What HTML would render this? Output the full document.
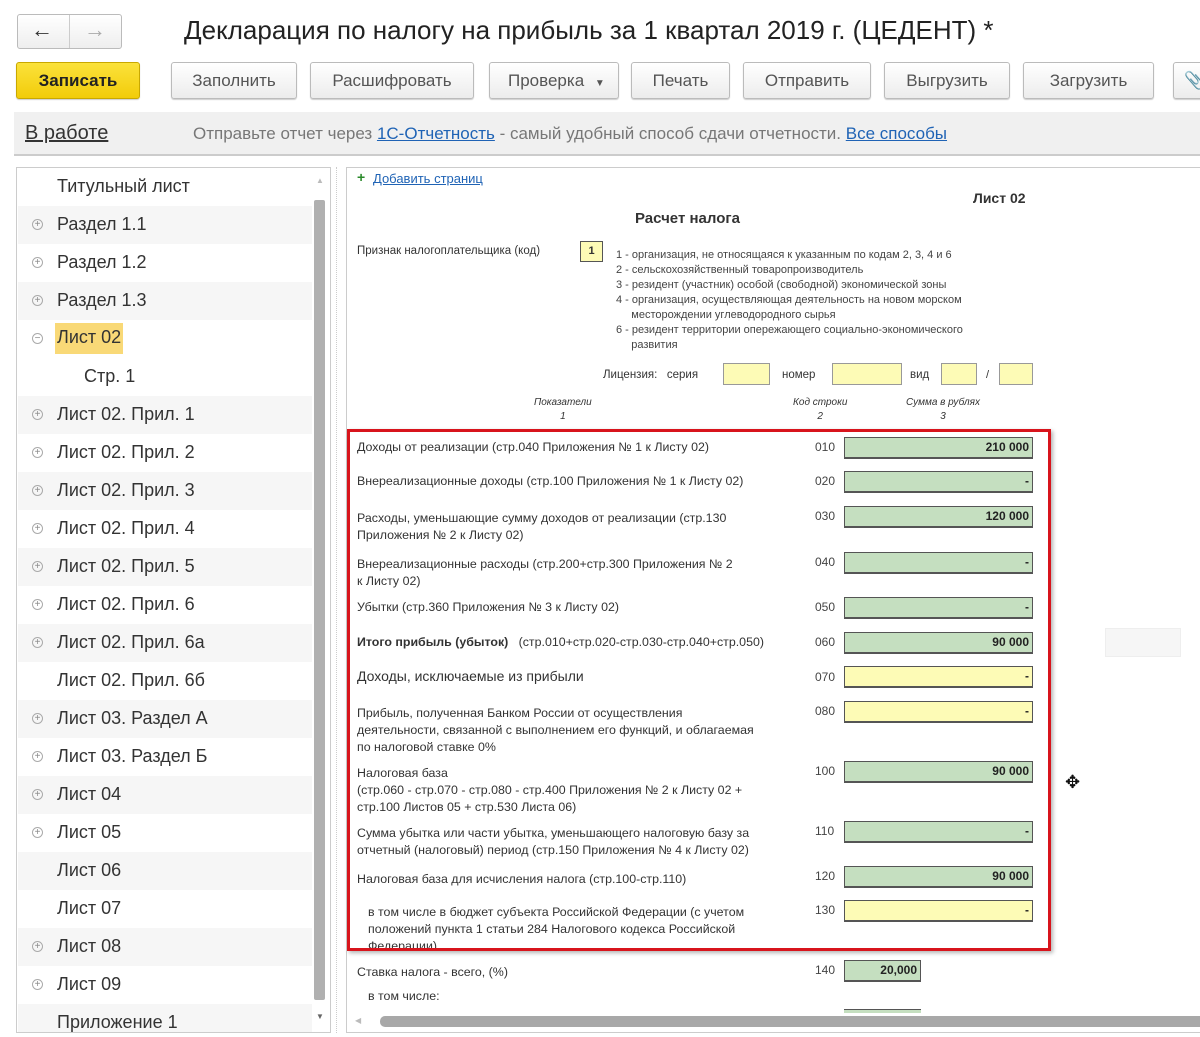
<!DOCTYPE html>
<html><head><meta charset="utf-8"><style>
*{margin:0;padding:0;box-sizing:border-box}
body{width:1200px;height:1037px;overflow:hidden;background:#fff;font-family:"Liberation Sans","DejaVu Sans",sans-serif;color:#333;position:relative}
.a{position:absolute;white-space:nowrap}
.btn{position:absolute;top:62px;height:37px;border:1px solid #bbb;border-radius:3px;background:linear-gradient(#fff,#ececec);box-shadow:0 1px 1px rgba(0,0,0,.2);font-size:17px;color:#555;text-align:center;line-height:35px}
.tr{position:absolute;left:18px;width:294px;height:38px;font-size:18px;color:#333}
.tr span.t{position:absolute;left:39px;top:8px}
.tr .ic{position:absolute;left:14px;top:13px;width:11px;height:11px;border:1px solid #aaa;border-radius:50%;font-size:10px;line-height:9px;text-align:center;color:#888}
.f{position:absolute;font-size:12.4px;color:#333;white-space:nowrap;line-height:17px}
.c{position:absolute;left:815px;font-size:12px;color:#444}
.g{position:absolute;left:844px;width:189px;height:22px;background:#c5dfc0;border:1px solid #555;border-bottom-width:2px;font-size:12px;font-weight:bold;text-align:right;padding-right:3px;line-height:19px;color:#222}
.y{background:#fdfbb6}
.lnk{color:#1f63b5;text-decoration:underline}
</style></head><body>
<div class="a" style="left:17px;top:14px;width:105px;height:35px;border:1px solid #bbb;border-radius:3px;background:linear-gradient(#fff,#eee)"></div>
<div class="a" style="left:69px;top:15px;width:1px;height:33px;background:#ccc"></div>
<div class="a" style="left:31px;top:17px;font-size:22px;color:#333">&#8592;</div>
<div class="a" style="left:84px;top:17px;font-size:22px;color:#aaa">&#8594;</div>
<div class="a" style="left:184px;top:15px;font-size:26px;color:#222">Декларация по налогу на прибыль за 1 квартал 2019 г. (ЦЕДЕНТ) *</div>
<div class="btn" style="left:16px;width:124px;background:linear-gradient(#fbe23b,#f2cc0a);border-color:#c9a800;font-weight:bold;color:#222">Записать</div>
<div class="btn" style="left:171px;width:126px">Заполнить</div>
<div class="btn" style="left:310px;width:164px">Расшифровать</div>
<div class="btn" style="left:489px;width:130px;text-align:left;padding-left:18px">Проверка <span style="font-size:10px;margin-left:6px">&#9660;</span></div>
<div class="btn" style="left:631px;width:99px">Печать</div>
<div class="btn" style="left:743px;width:128px">Отправить</div>
<div class="btn" style="left:884px;width:126px">Выгрузить</div>
<div class="btn" style="left:1023px;width:131px">Загрузить</div>
<div class="btn" style="left:1173px;width:40px;text-align:left;padding-left:10px;color:#777">&#128206;</div>
<div class="a" style="left:14px;top:112px;width:1186px;height:44px;background:#f0f0f0;border-bottom:2px solid #ccc"></div>
<div class="a" style="left:25px;top:122px;font-size:20px;color:#333;text-decoration:underline">В работе</div>
<div class="a" style="left:193px;top:124px;font-size:17px;color:#777">Отправьте отчет через <span class="lnk">1С-Отчетность</span> - самый удобный способ сдачи отчетности. <span class="lnk">Все способы</span></div>
<div class="a" style="left:16px;top:167px;width:315px;height:866px;border:1px solid #ccc;background:#fff;overflow:hidden"></div>
<div class="a" style="left:17px;top:168px;width:297px;height:864px;overflow:hidden">
<div class="tr" style="top:0;left:1px"><span class="t">Титульный лист</span></div>
<div class="tr" style="top:38px;left:1px;background:#f6f6f6"><span class="ic">+</span><span class="t">Раздел 1.1</span></div>
<div class="tr" style="top:76px;left:1px"><span class="ic">+</span><span class="t">Раздел 1.2</span></div>
<div class="tr" style="top:114px;left:1px;background:#f6f6f6"><span class="ic">+</span><span class="t">Раздел 1.3</span></div>
<div class="tr" style="top:152px;left:1px"><span class="ic">&#8722;</span><span class="t" style="left:37px;top:3px;padding:4px 2px 6px;background:#f9d977">Лист 02</span></div>
<div class="tr" style="top:190px;left:1px;background:#fff"><span class="t" style="left:66px">Стр. 1</span></div>
<div class="tr" style="top:228px;left:1px;background:#f6f6f6"><span class="ic">+</span><span class="t">Лист 02. Прил. 1</span></div>
<div class="tr" style="top:266px;left:1px"><span class="ic">+</span><span class="t">Лист 02. Прил. 2</span></div>
<div class="tr" style="top:304px;left:1px;background:#f6f6f6"><span class="ic">+</span><span class="t">Лист 02. Прил. 3</span></div>
<div class="tr" style="top:342px;left:1px"><span class="ic">+</span><span class="t">Лист 02. Прил. 4</span></div>
<div class="tr" style="top:380px;left:1px;background:#f6f6f6"><span class="ic">+</span><span class="t">Лист 02. Прил. 5</span></div>
<div class="tr" style="top:418px;left:1px"><span class="ic">+</span><span class="t">Лист 02. Прил. 6</span></div>
<div class="tr" style="top:456px;left:1px;background:#f6f6f6"><span class="ic">+</span><span class="t">Лист 02. Прил. 6а</span></div>
<div class="tr" style="top:494px;left:1px"><span class="t">Лист 02. Прил. 6б</span></div>
<div class="tr" style="top:532px;left:1px;background:#f6f6f6"><span class="ic">+</span><span class="t">Лист 03. Раздел А</span></div>
<div class="tr" style="top:570px;left:1px"><span class="ic">+</span><span class="t">Лист 03. Раздел Б</span></div>
<div class="tr" style="top:608px;left:1px;background:#f6f6f6"><span class="ic">+</span><span class="t">Лист 04</span></div>
<div class="tr" style="top:646px;left:1px"><span class="ic">+</span><span class="t">Лист 05</span></div>
<div class="tr" style="top:684px;left:1px;background:#f6f6f6"><span class="t">Лист 06</span></div>
<div class="tr" style="top:722px;left:1px"><span class="t">Лист 07</span></div>
<div class="tr" style="top:760px;left:1px;background:#f6f6f6"><span class="ic">+</span><span class="t">Лист 08</span></div>
<div class="tr" style="top:798px;left:1px"><span class="ic">+</span><span class="t">Лист 09</span></div>
<div class="tr" style="top:836px;left:1px;background:#f6f6f6"><span class="t">Приложение 1</span></div>
</div>
<div class="a" style="left:314px;top:200px;width:11px;height:800px;background:#b0b0b0;border-radius:2px"></div>
<div class="a" style="left:316px;top:176px;font-size:8px;color:#bbb">&#9650;</div>
<div class="a" style="left:316px;top:1012px;font-size:8px;color:#666">&#9660;</div>
<div class="a" style="left:336px;top:167px;width:1px;height:866px;border-left:1px dotted #ccc"></div>
<div class="a" style="left:346px;top:167px;width:860px;height:866px;border:1px solid #ccc"></div>
<div class="a" style="left:357px;top:169px;font-size:14px;color:#2a8a2a;font-weight:bold">+</div>
<div class="a" style="left:373px;top:171px;font-size:13px"><span class="lnk">Добавить страниц</span></div>
<div class="a" style="left:973px;top:190px;font-size:14px;font-weight:bold;color:#333">Лист 02</div>
<div class="a" style="left:635px;top:210px;font-size:15px;font-weight:bold;color:#333">Расчет налога</div>
<div class="f" style="left:357px;top:243px;font-size:11.5px">Признак налогоплательщика (код)</div>
<div class="a" style="left:580px;top:241px;width:23px;height:21px;background:#fdfbb6;border:1px solid #555;font-size:11px;font-weight:bold;text-align:center;line-height:19px">1</div>
<div class="f" style="left:616px;top:248px;font-size:11px;line-height:15px;color:#444">1 - организация, не относящаяся к указанным по кодам 2, 3, 4 и 6<br>2 - сельскохозяйственный товаропроизводитель<br>3 - резидент (участник) особой (свободной) экономической зоны<br>4 - организация, осуществляющая деятельность на новом морском<br>&nbsp;&nbsp;&nbsp;&nbsp;&nbsp;месторождении углеводородного сырья<br>6 - резидент территории опережающего социально-экономического<br>&nbsp;&nbsp;&nbsp;&nbsp;&nbsp;развития</div>
<div class="f" style="left:603px;top:367px;font-size:11.5px">Лицензия:&nbsp;&nbsp; серия</div>
<div class="a" style="left:723px;top:363px;width:47px;height:22px;background:#fdfbb6;border:1px solid #999"></div>
<div class="f" style="left:782px;top:367px;font-size:11.5px">номер</div>
<div class="a" style="left:832px;top:363px;width:70px;height:22px;background:#fdfbb6;border:1px solid #999"></div>
<div class="f" style="left:910px;top:367px;font-size:11.5px">вид</div>
<div class="a" style="left:941px;top:363px;width:36px;height:22px;background:#fdfbb6;border:1px solid #999"></div>
<div class="f" style="left:986px;top:367px;font-size:11px">/</div>
<div class="a" style="left:999px;top:363px;width:34px;height:22px;background:#fdfbb6;border:1px solid #999"></div>
<div class="f" style="left:534px;top:396px;font-size:10px;font-style:italic;text-align:center;line-height:14px">Показатели<br>1</div>
<div class="f" style="left:793px;top:396px;font-size:10px;font-style:italic;text-align:center;line-height:14px">Код строки<br>2</div>
<div class="f" style="left:906px;top:396px;font-size:10px;font-style:italic;text-align:center;line-height:14px">Сумма в рублях<br>3</div>

<div class="f" style="left:357px;top:439px">Доходы от реализации (стр.040 Приложения № 1 к Листу 02)</div>
<div class="c" style="top:440px">010</div><div class="g" style="top:437px">210 000</div>
<div class="f" style="left:357px;top:473px">Внереализационные доходы (стр.100 Приложения № 1 к Листу 02)</div>
<div class="c" style="top:474px">020</div><div class="g" style="top:471px">-</div>
<div class="f" style="left:357px;top:510px">Расходы, уменьшающие сумму доходов от реализации (стр.130<br>Приложения № 2 к Листу 02)</div>
<div class="c" style="top:509px">030</div><div class="g" style="top:506px">120 000</div>
<div class="f" style="left:357px;top:556px">Внереализационные расходы (стр.200+стр.300 Приложения № 2<br>к Листу 02)</div>
<div class="c" style="top:555px">040</div><div class="g" style="top:552px">-</div>
<div class="f" style="left:357px;top:599px">Убытки (стр.360 Приложения № 3 к Листу 02)</div>
<div class="c" style="top:600px">050</div><div class="g" style="top:597px">-</div>
<div class="f" style="left:357px;top:634px"><b>Итого прибыль (убыток)</b> &nbsp;&nbsp;(стр.010+стр.020-стр.030-стр.040+стр.050)</div>
<div class="c" style="top:635px">060</div><div class="g" style="top:632px">90 000</div>
<div class="f" style="left:357px;top:668px;font-size:14px">Доходы, исключаемые из прибыли</div>
<div class="c" style="top:670px">070</div><div class="g y" style="top:666px">-</div>
<div class="f" style="left:357px;top:705px">Прибыль, полученная Банком России от осуществления<br>деятельности, связанной с выполнением его функций, и облагаемая<br>по налоговой ставке 0%</div>
<div class="c" style="top:704px">080</div><div class="g y" style="top:701px">-</div>
<div class="f" style="left:357px;top:765px">Налоговая база<br>(стр.060 - стр.070 - стр.080 - стр.400 Приложения № 2 к Листу 02 +<br>стр.100 Листов 05 + стр.530 Листа 06)</div>
<div class="c" style="top:764px">100</div><div class="g" style="top:761px">90 000</div>
<div class="f" style="left:357px;top:825px">Сумма убытка или части убытка, уменьшающего налоговую базу за<br>отчетный (налоговый) период (стр.150 Приложения № 4 к Листу 02)</div>
<div class="c" style="top:824px">110</div><div class="g" style="top:821px">-</div>
<div class="f" style="left:357px;top:871px">Налоговая база для исчисления налога (стр.100-стр.110)</div>
<div class="c" style="top:869px">120</div><div class="g" style="top:866px">90 000</div>
<div class="f" style="left:368px;top:904px;height:44px;overflow:hidden">в том числе в бюджет субъекта Российской Федерации (с учетом<br>положений пункта 1 статьи 284 Налогового кодекса Российской<br>Федерации)</div>
<div class="c" style="top:903px">130</div><div class="g y" style="top:900px">-</div>
<div class="a" style="left:347px;top:429px;width:704px;height:522px;border:3px solid #d8141c;box-shadow:2px 2px 4px rgba(0,0,0,.3)"></div>
<div class="f" style="left:357px;top:964px">Ставка налога - всего, (%)</div>
<div class="c" style="top:963px">140</div><div class="g" style="top:960px;width:77px">20,000</div>
<div class="f" style="left:368px;top:988px">в том числе:</div>
<div class="a" style="left:844px;top:1009px;width:77px;height:6px;border-top:1px solid #555;background:#c5dfc0"></div>
<div class="a" style="left:1105px;top:628px;width:76px;height:29px;background:#f6f6f6;border:1px solid #eee"></div>
<div class="a" style="left:1065px;top:772px;font-size:18px;color:#111">&#10021;</div>
<div class="a" style="left:347px;top:1013px;width:853px;height:19px;background:#fff"></div>
<div class="a" style="left:355px;top:1016px;font-size:8px;color:#bbb">&#9664;</div>
<div class="a" style="left:380px;top:1016px;width:830px;height:11px;background:#a8a8a8;border-radius:5px"></div>
</body></html>
